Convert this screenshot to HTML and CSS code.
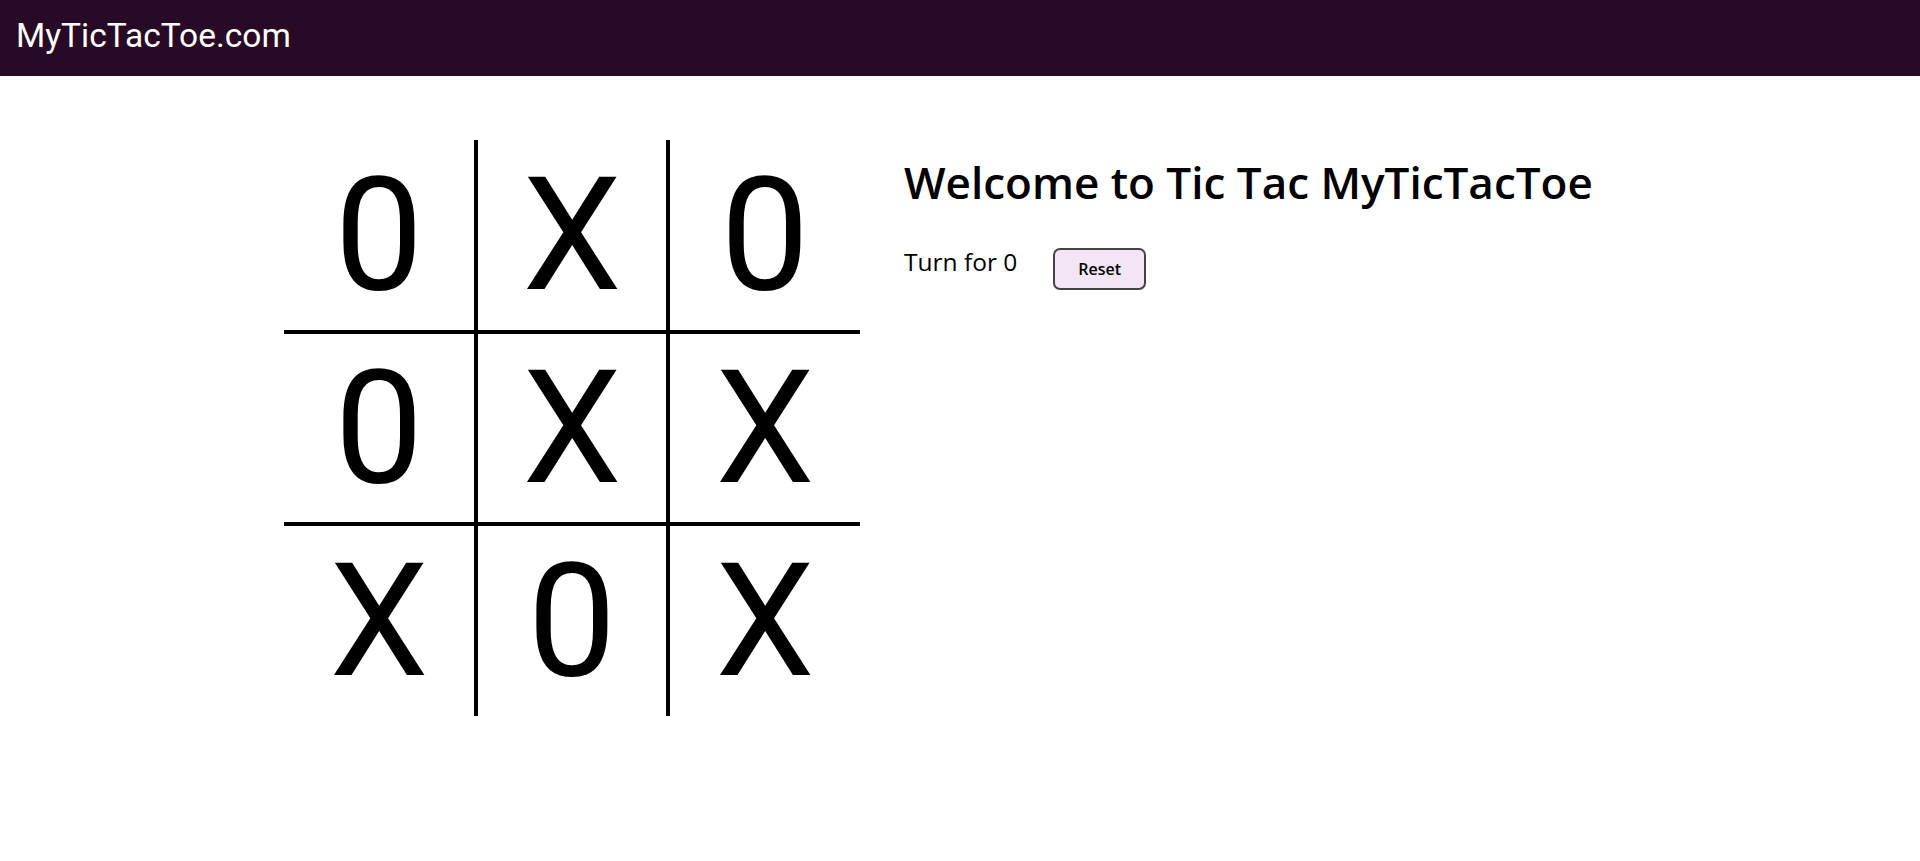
FILE: index.html
```html
<!DOCTYPE html>
<html lang="en">
<head>
<meta charset="utf-8">
<title>MyTicTacToe.com</title>
<link rel="stylesheet" href="styles.css">
</head>
<body>
<header class="appbar">
  <div class="brand">MyTicTacToe.com</div>
</header>
<main class="game">
  <div class="board">
    <div class="cell r0 c0">0</div>
    <div class="cell r0 c1">X</div>
    <div class="cell r0 c2">0</div>
    <div class="cell r1 c0">0</div>
    <div class="cell r1 c1">X</div>
    <div class="cell r1 c2">X</div>
    <div class="cell r2 c0">X</div>
    <div class="cell r2 c1">0</div>
    <div class="cell r2 c2">X</div>
  </div>
  <section class="panel">
    <h1 class="title">Welcome to Tic Tac MyTicTacToe</h1>
    <div class="status-row">
      <span class="turn">Turn for 0</span>
      <button class="reset" type="button">Reset</button>
    </div>
  </section>
</main>
</body>
</html>
```

FILE: styles.css
```css
* {
  box-sizing: border-box;
}

html, body {
  margin: 0;
  padding: 0;
  background: #ffffff;
}

body {
  font-family: "Open Sans", "Noto Sans", sans-serif;
  color: #000;
}

.appbar {
  height: 76px;
  background: #290a26;
  display: flex;
  align-items: center;
  padding: 0 16px 4px 16px;
}

.brand {
  font-family: Roboto, "Liberation Sans", sans-serif;
  font-size: 33.5px;
  line-height: 34px;
  font-weight: 400;
  color: #ffffff;
}

.game {
  display: flex;
  justify-content: center;
  align-items: flex-start;
  gap: 44px;
  padding-top: 64px;
}

.board {
  display: grid;
  grid-template-columns: repeat(3, 192px);
  grid-template-rows: repeat(3, 192px);
}

.cell {
  display: flex;
  align-items: center;
  justify-content: center;
  font-family: Roboto, "Liberation Sans", sans-serif;
  font-size: 158px;
  line-height: 160px;
  font-weight: 400;
  color: #000;
}

.c0 { border-right: 2px solid #000; }
.c1 { border-left: 2px solid #000; border-right: 2px solid #000; }
.c2 { border-left: 2px solid #000; }
.r0 { border-bottom: 2px solid #000; }
.r1 { border-top: 2px solid #000; border-bottom: 2px solid #000; }
.r2 { border-top: 2px solid #000; }

.panel {
  width: 732px;
}

.title {
  margin: 14px 0 36px 0;
  font-family: "Open Sans", "Noto Sans", sans-serif;
  font-size: 44px;
  line-height: 56px;
  font-weight: 600;
  color: #000;
  white-space: nowrap;
}

.status-row {
  display: flex;
  align-items: flex-start;
  gap: 36px;
}

.turn {
  font-family: "Open Sans", "Noto Sans", sans-serif;
  font-size: 24.5px;
  line-height: 32px;
  font-weight: 400;
  color: #000;
}

.reset {
  margin-top: 2px;
  height: 42px;
  padding: 0 23px;
  background: #f3e5f5;
  border: 2px solid #444;
  border-radius: 7px;
  font-family: "Open Sans", "Noto Sans", sans-serif;
  font-size: 16px;
  font-weight: 600;
  color: #000;
  cursor: pointer;
}
```
